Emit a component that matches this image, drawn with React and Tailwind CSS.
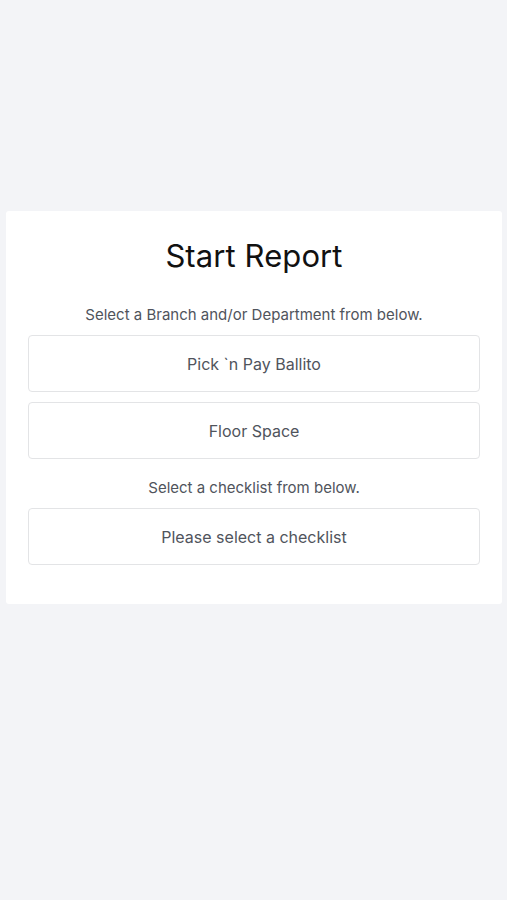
export default function App() {
  return (
    <div className="min-h-[900px] w-full bg-[#f3f4f7] pt-[211px]" style={{ fontFamily: "Inter, 'Liberation Sans', sans-serif" }}>
      <div className="mx-[6px] w-[496px] rounded-[3px] bg-white px-[22px] pt-[26px] pb-[39px] flex flex-col items-center">
        <h1 className="text-[31px] leading-[38px] text-[#111111] tracking-[0.1px]">Start Report</h1>
        <p className="mt-[30px] text-[15px] leading-[20px] text-[#50545c]">Select a Branch and/or Department from below.</p>
        <button className="mt-[10px] h-[57px] w-full rounded-[4px] border border-[#e3e4e6] bg-white text-[16px] text-[#50545c]">Pick `n Pay Ballito</button>
        <button className="mt-[10px] h-[57px] w-full rounded-[4px] border border-[#e3e4e6] bg-white text-[16px] text-[#50545c]">Floor Space</button>
        <p className="mt-[19px] text-[15px] leading-[20px] text-[#50545c]">Select a checklist from below.</p>
        <button className="mt-[10px] h-[57px] w-full rounded-[4px] border border-[#e3e4e6] bg-white text-[16px] text-[#50545c]">Please select a checklist</button>
      </div>
    </div>
  );
}
